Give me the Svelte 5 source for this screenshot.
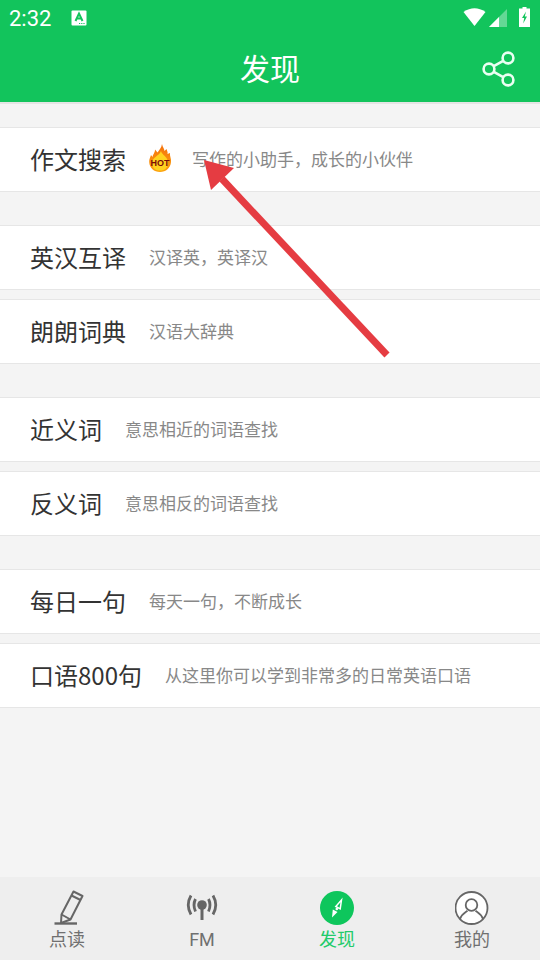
<script>
  const groups = [
    [{ title: "作文搜索", sub: "写作的小助手，成长的小伙伴", hot: true }],
    [
      { title: "英汉互译", sub: "汉译英，英译汉" },
      { title: "朗朗词典", sub: "汉语大辞典" },
    ],
    [
      { title: "近义词", sub: "意思相近的词语查找" },
      { title: "反义词", sub: "意思相反的词语查找" },
    ],
    [
      { title: "每日一句", sub: "每天一句，不断成长" },
      { title: "口语800句", sub: "从这里你可以学到非常多的日常英语口语" },
    ],
  ];
</script>

<div class="page">
  <header>
    <div class="status">
      <span class="time">2:32</span>
      <svg class="note" width="16" height="16" viewBox="0 0 16 16">
        <rect x="0.5" y="0.5" width="15" height="15" rx="1" fill="#fff" />
        <path d="M4.5 11 L8 3.5 L11.5 11 M6 8.5 H10" fill="none" stroke="#12c45c" stroke-width="2" />
        <path d="M8 13.5h1.2M10.2 13.5h1.2M12.4 13.5h1.2" stroke="#12c45c" stroke-width="1" />
      </svg>
      <span class="spacer"></span>
      <svg class="wifi" width="23" height="18" viewBox="0 0 23 18">
        <path d="M0.5 4 Q11.5 -3.5 22.5 4 L11.5 18 Z" fill="#fff" />
      </svg>
      <svg class="signal" width="18" height="18" viewBox="0 0 18 18">
        <path d="M18 0 V18 H0 Z" fill="#fff" fill-opacity="0.35" />
        <path d="M10 8 V18 H0 Z" fill="#fff" />
      </svg>
      <svg class="battery" width="11" height="20" viewBox="0 0 11 20">
        <path d="M3.5 0 H7.5 V1.5 H11 V20 H0 V1.5 H3.5 Z" fill="#fff" />
        <path d="M7 4.5 L3 11 H5.2 L4.2 16.5 L8 9.5 H5.8 Z" fill="#12c45c" />
      </svg>
    </div>
    <div class="bar">
      <h1>发现</h1>
      <svg class="share" width="34" height="36" viewBox="0 0 34 36">
        <g fill="none" stroke="#eafff2" stroke-width="2.6">
          <circle cx="27" cy="7" r="5.4" />
          <circle cx="8" cy="18" r="5.4" />
          <circle cx="27" cy="29" r="5.4" />
          <path d="M12.8 15.2 L22.2 9.8 M12.8 20.8 L22.2 26.2" />
        </g>
      </svg>
    </div>
  </header>

  <main>
    {#each groups as group}
      <section>
        {#each group as item}
          <div class="row">
            <span class="title">{item.title}</span>
            {#if item.hot}
              <svg class="hot" width="24" height="30" viewBox="0 0 24 30">
                <defs>
                  <linearGradient id="flame" x1="0" y1="0" x2="0" y2="1">
                    <stop offset="0" stop-color="#f4700c" />
                    <stop offset="1" stop-color="#fca30f" />
                  </linearGradient>
                </defs>
                <path d="M14 0 C14.5 3 16 4 16.5 7 L18.5 5 C19 7 20 8 19.5 10 L22 9 C21.5 12 23.5 15 23 18 C22.5 24 18 28 12 28 C6 28 1.5 24 1.2 18 C1 15 2.5 13 3 11 L4.5 13 C5 10 7 9 7 5.5 L9.5 8.5 C11 6 13.5 4 14 0 Z" fill="url(#flame)" />
                <path d="M13 7 C14 11 19 12 20 18 C20 24 17 26.5 12 26.500 C7 26.5 4 24 4 18 C5 13 11 12 13 7 Z" fill="#ffd21f" />
                <text x="12" y="22" text-anchor="middle" class="hot-text">HOT</text>
              </svg>
            {/if}
            <span class="sub">{item.sub}</span>
          </div>
        {/each}
      </section>
    {/each}
  </main>

  <nav>
    <div class="tab">
      <svg width="34" height="36" viewBox="0 0 34 36">
        <g fill="none" stroke="#666" stroke-width="2" stroke-linejoin="round">
          <path d="M23.5 1.5 L32.5 6 L20.5 29.5 L11 33 L11.5 24.5 Z" />
          <path d="M21.5 5.5 L30.5 10 M11.5 24.5 L20.5 29.5" />
        </g>
        <path d="M4.5 33.5 H27" stroke="#666" stroke-width="2.4" />
      </svg>
      <span>点读</span>
    </div>
    <div class="tab">
      <svg width="34" height="36" viewBox="0 0 34 36">
        <circle cx="17" cy="15" r="4.8" fill="#666" />
        <path d="M17 18 V30" stroke="#666" stroke-width="3" />
        <g fill="none" stroke="#666" stroke-width="2.8">
          <path d="M10.5 9 Q7.5 15 10.5 21.5 M23.5 9 Q26.5 15 23.5 21.5" />
          <path d="M6 5.5 Q0.5 15 6 24.5 M28 5.5 Q33.5 15 28 24.5" />
        </g>
      </svg>
      <span class="latin">FM</span>
    </div>
    <div class="tab active">
      <svg width="34" height="36" viewBox="0 0 34 36">
        <circle cx="17" cy="18" r="17" fill="#0ec65c" />
        <path d="M21.5 10 L15.8 16.5 L20.2 18.8 Z" fill="none" stroke="#fff" stroke-width="1.5" />
        <path d="M12 27.5 L12.8 19.5 L17.5 22 Z" fill="#fff" />
        <circle cx="16.8" cy="19" r="1.3" fill="#fff" />
      </svg>
      <span>发现</span>
    </div>
    <div class="tab">
      <svg width="34" height="36" viewBox="0 0 34 36">
        <circle cx="16.5" cy="18" r="16" fill="#fff" stroke="#666" stroke-width="1.8" />
        <circle cx="16.5" cy="15" r="5.8" fill="none" stroke="#666" stroke-width="1.8" />
        <path d="M5 29 C6.5 24 9.5 23 12.5 20.8 M28 29 C26.5 24 23.5 23 20.5 20.8" fill="none" stroke="#666" stroke-width="1.8" />
      </svg>
      <span>我的</span>
    </div>
  </nav>

  <svg class="arrow" width="540" height="960" viewBox="0 0 540 960">
    <path d="M387 355 L222 179" stroke="#e53c42" stroke-width="7" />
    <path d="M204 160 L234 168 L211 190 Z" fill="#e53c42" />
  </svg>
</div>

<style>
  :global(body) {
    margin: 0;
    background: #f4f4f4;
  }

  .page {
    position: relative;
    width: 540px;
    height: 960px;
    display: flex;
    flex-direction: column;
    overflow: hidden;
    font-family: "Noto Sans CJK SC", "Noto Sans", sans-serif;
    background: #f4f4f4;
  }

  header {
    background: #12c45c;
    height: 102px;
    border-bottom: 2px solid #e4e4e4;
    color: #fff;
    flex-shrink: 0;
  }

  .status {
    display: flex;
    align-items: center;
    height: 36px;
    padding: 0 10px 0 9px;
  }

  .time {
    font-family: Roboto, sans-serif;
    font-size: 22px;
    width: 62px;
  }

  .spacer {
    flex: 1;
  }

  .wifi {
    margin-top: -2px;
  }

  .signal {
    margin: 0 12px 0 3px;
  }

  .battery {
    margin-top: -3px;
  }

  .bar {
    position: relative;
    height: 66px;
    display: flex;
    align-items: center;
    justify-content: center;
  }

  h1 {
    margin: 0;
    font-size: 30px;
    font-weight: 400;
    padding-bottom: 4px;
    line-height: 1.2;
  }

  .share {
    position: absolute;
    right: 25px;
    top: 15px;
  }

  main {
    flex: 1;
    padding-top: 23px;
    display: flex;
    flex-direction: column;
    gap: 33px;
  }

  section {
    display: flex;
    flex-direction: column;
    gap: 9px;
  }

  .row {
    height: 65px;
    box-sizing: border-box;
    background: #fff;
    border-top: 1px solid #e6e6e6;
    border-bottom: 1px solid #e6e6e6;
    padding: 0 0 2px 30px;
    display: flex;
    align-items: center;
    gap: 23px;
  }

  .title {
    font-size: 24px;
    color: #333;
  }

  .sub {
    font-size: 17px;
    color: #888;
  }

  .hot {
    margin: 0 -3px 0 -1px;
  }

  .hot-text {
    font-family: "Liberation Sans", sans-serif;
    font-size: 9px;
    font-weight: 700;
    fill: #7a0c08;
  }

  nav {
    height: 83px;
    background: #eee;
    display: grid;
    grid-template-columns: repeat(4, 1fr);
    flex-shrink: 0;
  }

  .tab {
    display: flex;
    flex-direction: column;
    align-items: center;
    padding: 13px 1px 0 0;
    font-size: 18px;
    line-height: 26px;
    color: #707070;
  }

  .tab span {
    margin-top: -1px;
  }

  .tab svg {
    display: block;
  }

  .tab.active {
    color: #22cb6a;
  }

  .tab .latin {
    font-family: Roboto, sans-serif;
    margin-top: 1px;
  }

  .arrow {
    position: absolute;
    left: 0;
    top: 0;
    pointer-events: none;
  }
</style>
